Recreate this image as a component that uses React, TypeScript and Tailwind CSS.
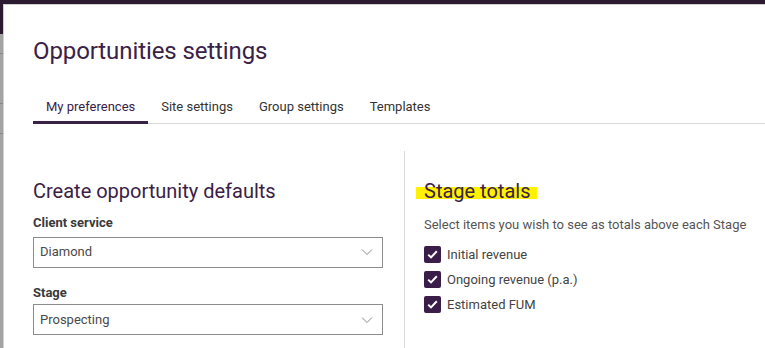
import React from "react";

const Chevron = () => (
  <svg width="12" height="8" viewBox="0 0 12 8" fill="none">
    <path d="M1 1.5 L6 6.5 L11 1.5" stroke="#8a8a8a" strokeWidth="1" />
  </svg>
);

const Check = () => (
  <span className="w-[17px] h-[17px] rounded-[2px] bg-[#3b1d4a] flex items-center justify-center shrink-0">
    <svg width="11" height="9" viewBox="0 0 11 9" fill="none">
      <path d="M1.2 4.6 L4 7.4 L9.8 1.3" stroke="white" strokeWidth="2" />
    </svg>
  </span>
);

const Select = ({ value }: { value: string }) => (
  <div className="h-[31px] w-[350px] border border-[#8c8c8c] flex items-center justify-between pl-[6px] pr-[9px] text-[13px] text-[#4a4a4a]">
    <span>{value}</span>
    <Chevron />
  </div>
);

export default function App() {
  const tabs = ["My preferences", "Site settings", "Group settings", "Templates"];
  return (
    <div
      className="relative w-[765px] h-[348px] overflow-hidden bg-[#a3a3a3]"
      style={{ fontFamily: "Roboto, 'Liberation Sans', sans-serif" }}
    >
      <div className="h-[34px] bg-[#2b1a30]" />
      <div className="flex flex-col">
        <div className="h-[20px] border-b border-[#888]" />
        <div className="h-[50px] border-b border-[#888]" />
        <div className="h-[30px] border-b border-[#888]" />
      </div>
      <div className="absolute left-[3px] top-[4px] right-0 bottom-0 bg-white border-l border-t border-[#d0d0d0]">
        <div className="pl-[29px]">
          <h1 className="text-[24px] leading-none text-[#3a2148] pt-[34px] tracking-[-0.1px]">Opportunities settings</h1>
          <div className="mt-[26px] flex border-b border-[#d9d9d9] h-[35px]">
            {tabs.map((t, i) => (
              <div
                key={t}
                className={
                  i === 0
                    ? "px-[13px] pt-[8px] text-[13px] text-[#3a2148] border-b-[3px] border-[#3a2148] -mb-[1px]"
                    : "px-[13px] pt-[8px] text-[13px] text-[#333] "
                }
              >
                {t}
              </div>
            ))}
          </div>
          <div className="flex mt-[27px]">
            <div className="w-[371px] pt-[30px]">
              <h2 className="text-[20px] leading-none text-[#3a2148]">Create opportunity defaults</h2>
              <div className="mt-[12px] text-[13px] font-bold text-[#3a3a3a]">Client service</div>
              <div className="mt-[4px]">
                <Select value="Diamond" />
              </div>
              <div className="mt-[15px] text-[13px] font-bold text-[#3a3a3a]">Stage</div>
              <div className="mt-[2px]">
                <Select value="Prospecting" />
              </div>
            </div>
            <div className="w-px bg-[#d9d9d9] h-[200px]" />
            <div className="pl-[19px] pt-[30px]">
              <h2 className="relative inline-block text-[20px] leading-none text-[#3a2148]">
                <span className="absolute left-[-8px] right-[-7px] top-[6px] h-[12px] bg-[#fff200]" />
                <span className="relative">Stage totals</span>
              </h2>
              <div className="mt-[10px] text-[13px] text-[#555]">Select items you wish to see as totals above each Stage</div>
              <div className="mt-[10px] flex flex-col gap-[5px]">
                {["Initial revenue", "Ongoing revenue (p.a.)", "Estimated FUM"].map((l) => (
                  <div key={l} className="flex items-center gap-[6px] text-[13px] leading-[20px] text-[#444]">
                    <Check />
                    <span>{l}</span>
                  </div>
                ))}
              </div>
            </div>
          </div>
        </div>
      </div>
    </div>
  );
}
